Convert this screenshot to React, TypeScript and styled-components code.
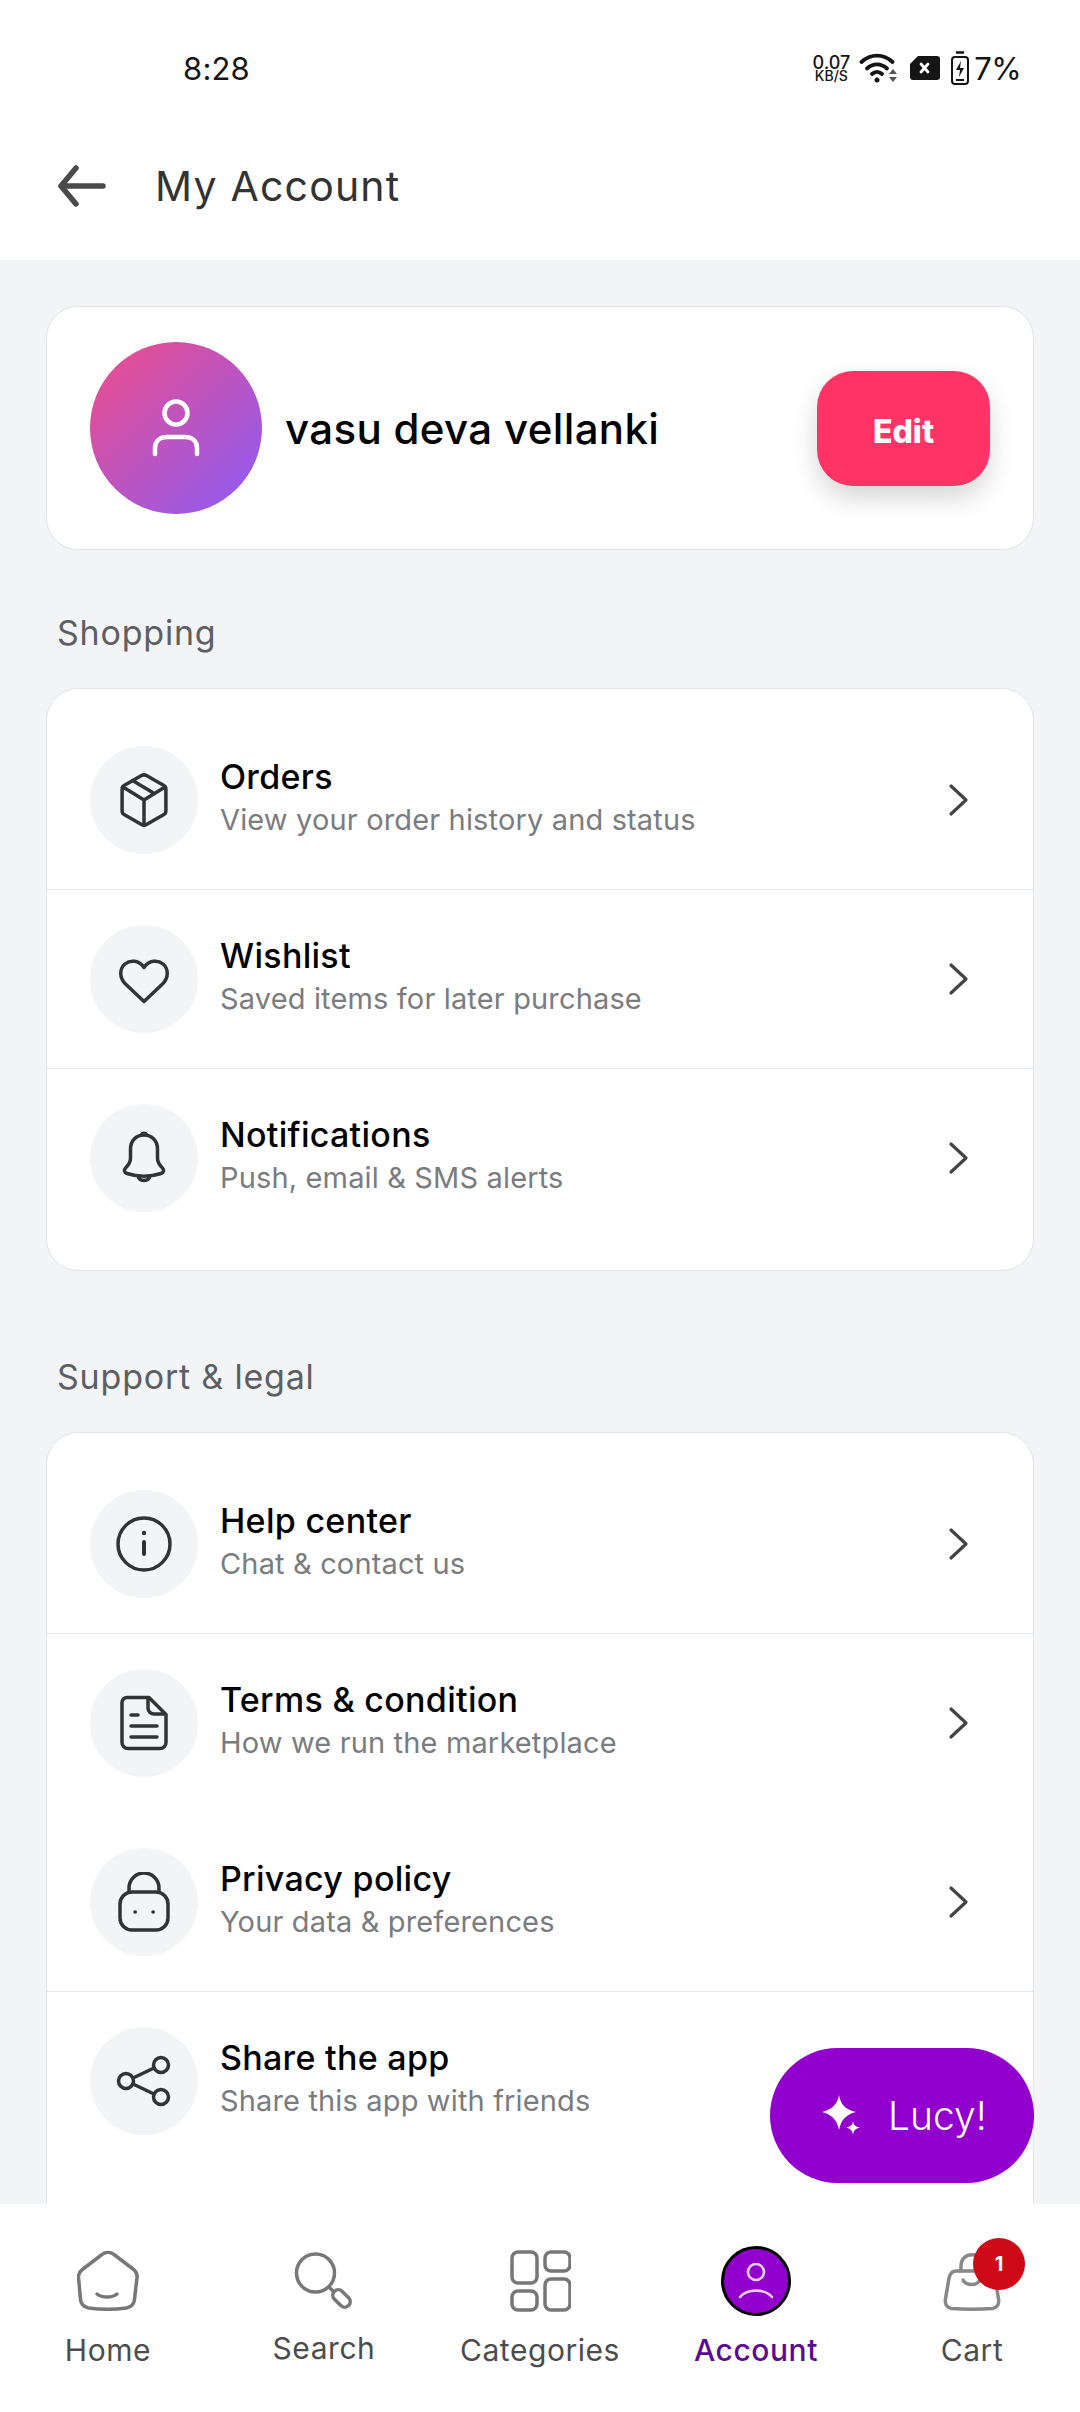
import React from 'react'
import styled, { createGlobalStyle } from 'styled-components'

const GlobalStyle = createGlobalStyle`
  html, body {
    margin: 0;
    padding: 0;
    background: #fff;
  }
  * {
    box-sizing: border-box;
  }
  body {
    font-family: Inter, "Noto Sans", sans-serif;
  }
`

const Screen = styled.div`
  position: relative;
  display: flex;
  flex-direction: column;
  width: 1080px;
  height: 2412px;
  overflow: hidden;
  background: #f3f4f6;
`

const StatusBar = styled.div`
  display: flex;
  align-items: center;
  justify-content: space-between;
  height: 136px;
  padding: 0 59px 0 183px;
  background: #fff;
  color: #151515;
`

const Clock = styled.span`
  font-size: 31px;
  letter-spacing: 0.2px;
`

const StatusIcons = styled.div`
  display: flex;
  align-items: center;
`

const NetSpeed = styled.div`
  display: flex;
  flex-direction: column;
  align-items: center;
  margin-right: 9px;
  font-size: 18px;
  font-weight: 500;
  line-height: 15px;
  span:last-child {
    font-size: 14px;
    line-height: 12px;
  }
`

const Percent = styled.span`
  margin-left: 4px;
  font-size: 31px;
  letter-spacing: -0.6px;
`

const Header = styled.header`
  display: flex;
  align-items: center;
  gap: 49px;
  height: 124px;
  padding: 0 0 24px 58px;
  background: #fff;
`

const Title = styled.h1`
  margin: 0;
  font-size: 41px;
  font-weight: 400;
  letter-spacing: 1.2px;
  color: #333;
`

const Scroller = styled.main`
  flex: 1;
  min-height: 0;
  overflow: hidden;
  padding: 46px 46px 0;
`

const Card = styled.section`
  background: #fff;
  border: 1px solid #e2e3e6;
  border-radius: 32px;
`

const ProfileCard = styled(Card)`
  display: flex;
  align-items: center;
  height: 244px;
  padding: 0 43px;
`

const Avatar = styled.div`
  display: flex;
  align-items: center;
  justify-content: center;
  flex: none;
  width: 172px;
  height: 172px;
  border-radius: 50%;
  background: linear-gradient(135deg, #f04c88, #8a5cf6);
`

const Name = styled.div`
  flex: 1;
  margin-left: 23px;
  font-size: 42px;
  font-weight: 500;
  letter-spacing: 0.35px;
  color: #000;
`

const EditButton = styled.button`
  width: 173px;
  height: 115px;
  padding: 6px 0 0;
  border: 0;
  border-radius: 36px;
  background: #ff3366;
  color: #fff;
  font-family: inherit;
  font-size: 32px;
  font-weight: 800;
  box-shadow: 0 12px 26px rgba(0, 0, 0, 0.16);
`

const SectionLabel = styled.h2<{ $top: number }>`
  margin: ${({ $top }) => $top}px 0 32px 11px;
  font-size: 34px;
  line-height: 46px;
  font-weight: 400;
  letter-spacing: 0.8px;
  color: #5c5f63;
`

const RowList = styled(Card)<{ $runsOn?: boolean }>`
  padding: 22px 0 ${({ $runsOn }) => ($runsOn ? 120 : 22)}px;
`

const Row = styled.div<{ $divider?: boolean }>`
  display: flex;
  align-items: center;
  padding: 35px 62px 35px 43px;
  border-bottom: 1px solid ${({ $divider }) => ($divider ? '#e8e9eb' : 'transparent')};
`

const IconCircle = styled.div`
  display: flex;
  align-items: center;
  justify-content: center;
  flex: none;
  width: 108px;
  height: 108px;
  border-radius: 50%;
  background: #f3f4f6;
`

const RowText = styled.div`
  flex: 1;
  margin-left: 22px;
  padding-bottom: 2px;
`

const RowTitle = styled.div`
  font-size: 34px;
  font-weight: 500;
  line-height: 42px;
  letter-spacing: 0.3px;
  color: #000;
`

const RowSub = styled.div`
  font-size: 29px;
  line-height: 44px;
  letter-spacing: 0.15px;
  color: #7a7c80;
`

const Fab = styled.button`
  position: absolute;
  right: 46px;
  bottom: 229px;
  display: flex;
  align-items: center;
  gap: 26px;
  width: 264px;
  height: 135px;
  padding: 0 0 0 52px;
  border: 0;
  border-radius: 68px;
  background: #9100cc;
  color: #fff;
  font-family: inherit;
  font-size: 39px;
  font-weight: 300;
`

const BottomNav = styled.nav`
  display: grid;
  grid-template-columns: repeat(5, 1fr);
  flex: none;
  height: 208px;
  padding-top: 42px;
  background: #fff;
`

const NavItem = styled.div`
  position: relative;
  display: flex;
  flex-direction: column;
  align-items: center;
`

const NavIcon = styled.div`
  display: flex;
  align-items: center;
  justify-content: center;
  height: 70px;
`

const NavLabel = styled.span<{ $active?: boolean; $lift?: boolean }>`
  margin-top: ${({ $lift }) => ($lift ? 10 : 12)}px;
  font-size: 30px;
  line-height: 44px;
  letter-spacing: 0.55px;
  font-weight: ${({ $active }) => ($active ? 500 : 400)};
  color: ${({ $active }) => ($active ? '#5b0a91' : '#4c4c4c')};
`

const ActiveBubble = styled.div`
  display: flex;
  align-items: center;
  justify-content: center;
  width: 70px;
  height: 70px;
  border: 3px solid #000;
  border-radius: 50%;
  background: #9100cc;
`

const Badge = styled.span`
  position: absolute;
  top: -8px;
  left: 109px;
  display: flex;
  align-items: center;
  justify-content: center;
  width: 52px;
  height: 52px;
  border-radius: 50%;
  background: #cf0a18;
  color: #fff;
  font-size: 20px;
  font-weight: 700;
`

const Line = ({ size, color = '#333', sw = 3.5, vb = 56, children }: { size: number; color?: string; sw?: number; vb?: number; children: React.ReactNode }) => (
  <svg width={size} height={size} viewBox={`0 0 ${vb} ${vb}`} fill="none" stroke={color} strokeWidth={sw} strokeLinecap="round" strokeLinejoin="round">
    {children}
  </svg>
)

const BoxIcon = () => (
  <Line size={56}>
    <path d="M25.5 3.6a5 5 0 0 1 5 0l17.400 10a4 4 0 0 1 2 3.500v21.800a4 4 0 0 1-2 3.500l-17.400 10a5 5 0 0 1-5 0l-17.400-10a4 4 0 0 1-2-3.500V17.100a4 4 0 0 1 2-3.500z" />
    <path d="M7 15l21 13 21-13M28 28v25M16.500 8.500l21 12.500" />
  </Line>
)

const HeartIcon = () => (
  <Line size={56}>
    <path d="M28 50.500 9.500 33C3 26.500 3.500 17.500 9 13c5.500-4.500 14-3.800 19 3.500 5-7.300 13.500-8 19-3.500 5.500 4.500 6 13.500-.5 20z" />
  </Line>
)

const BellIcon = () => (
  <Line size={56}>
    <path d="M28 5c-8 0-13.500 6-13.500 14v9c0 4-1.500 6.500-4.500 9.500-2.500 2.500-2 5 1 6 11 3.500 23 3.500 34 0 3-1 3.500-3.500 1-6-3-3-4.500-5.500-4.500-9.500v-9C41.500 11 36 5 28 5z" />
    <path d="M22.500 47.500c2 4 9 4 11 0M25.500 5c.5-2.500 4.500-2.500 5 0" />
  </Line>
)

const InfoIcon = () => (
  <Line size={56}>
    <circle cx="28" cy="28" r="26" />
    <path d="M28 26v12" strokeWidth={4} />
    <circle cx="28" cy="17" r="1.200" strokeWidth={2} fill="#333" />
  </Line>
)

const FileIcon = () => (
  <Line size={56}>
    <path d="M11 2.500h22l17 17V47.500a6 6 0 0 1-6 6H12a6 6 0 0 1-6-6V7.500a5 5 0 0 1 5-5z" />
    <path d="M32 3v10a6 6 0 0 0 6 6h11M15 20h7M15 31h26M15 42h26" />
  </Line>
)

const LockIcon = () => (
  <Line size={60} vb={60}>
    <rect x="6" y="20" width="48" height="38" rx="12" />
    <path d="M15 20v-4a15 15 0 0 1 30 0v4" />
    <path d="M21 40h.2M39 40h.2" strokeWidth={3.500} />
  </Line>
)

const ShareIcon = () => (
  <Line size={56}>
    <circle cx="10" cy="28" r="7.500" />
    <circle cx="45" cy="12" r="7.500" />
    <circle cx="45" cy="44" r="7.500" />
    <path d="M17 25l21-10M17 31l21 10" />
  </Line>
)

const Chevron = () => (
  <svg width="24" height="34" viewBox="0 0 24 34" fill="none" stroke="#444" strokeWidth="3.200" strokeLinecap="round" strokeLinejoin="round">
    <path d="M4 3l15 14L4 31" />
  </svg>
)

const BackArrow = () => (
  <svg width="48" height="42" viewBox="0 0 48 42" fill="none" stroke="#4a4a4a" strokeWidth="5.500" strokeLinecap="round" strokeLinejoin="round">
    <path d="M45 21H3M18 3L3 21l15 18" />
  </svg>
)

const AvatarIcon = () => (
  <svg width="48" height="58" viewBox="0 0 48 58" fill="none" stroke="#fff" strokeWidth="4.500" strokeLinecap="round">
    <circle cx="24" cy="14" r="11.500" />
    <path d="M3 55v-6c0-7 5-11 12-11h18c7 0 12 4 12 11v6" />
  </svg>
)

const AccountIcon = () => (
  <svg width="36" height="36" viewBox="0 0 36 36" fill="none" stroke="#eacdf5" strokeWidth="2.600" strokeLinecap="round">
    <circle cx="18" cy="9" r="8" />
    <path d="M2 34c7-8.500 25-8.500 32 0" />
  </svg>
)

const HomeIcon = () => (
  <Line size={62} vb={62} color="#777">
    <path d="M25 4.500c3.500-2.800 8.500-2.800 12 0L56 19c3 2.300 4.300 5 4 8.500l-2.500 22c-.5 5-3.500 7.500-8 8.500-12 1.500-26 1.500-38 0-4.500-1-7.500-3.500-8-8.500L1.500 27.500C1.200 24 3 21.300 6 19z" />
    <path d="M20 44c5 4 15 4 20 0" />
  </Line>
)

const SearchIcon = () => (
  <Line size={62} vb={62} color="#777">
    <circle cx="22.500" cy="23" r="19" />
    <path d="M36 37l4 4" />
    <rect x="38.500" y="43" width="20" height="11" rx="5.500" transform="rotate(45 48.500 48.500)" />
  </Line>
)

const GridIcon = () => (
  <Line size={62} vb={62} color="#777">
    <rect x="3" y="2" width="25" height="31" rx="6" />
    <rect x="36" y="2" width="25" height="19" rx="6" />
    <rect x="3" y="41" width="25" height="19" rx="6" />
    <rect x="36" y="29" width="25" height="31" rx="6" />
  </Line>
)

const BagIcon = () => (
  <Line size={62} vb={62} color="#888">
    <path d="M15 21h32c4 0 6 3 7 7l3.500 21c1 6-2 9-6 9.500-13 1-28 1-41 0-4-.5-7-3.500-6-9.500L8 28c1-4 3-7 7-7z" />
    <path d="M20 21v-5c0-15 22-15 22 0v5M22 30c3 6 14 6 17 0" />
  </Line>
)

const SparkleIcon = () => (
  <svg width="40" height="44" viewBox="0 0 40 44" fill="#fff">
    <path d="M17 1c1.500 9 6 14.500 17 17-10 2.500-15 8-17 18-2-10-7-15.500-17-18C10 15.500 15.500 10 17 1z" />
    <path d="M31 27c.5 4 2.500 6 7 6.500-4.500 1-6.500 3-7 7.500-.5-4.500-2.500-6.500-7-7.500 4.500-.5 6.500-2.500 7-6.500z" />
  </svg>
)

const WifiIcon = () => (
  <svg width="40" height="30" viewBox="0 0 40 30" fill="none">
    <g stroke="#151515" strokeWidth="3.800" strokeLinecap="round">
      <path d="M2.500 9c9-8.500 22-8.500 31 0" />
      <path d="M8 15.500c6-5.500 14-5.500 20 0" />
      <path d="M13 21c3-2.800 7-2.800 10 0" />
    </g>
    <circle cx="18" cy="27" r="2.500" fill="#151515" />
    <path d="M34 16l4 5h-8zM34 29l4-5h-8z" fill="#555" />
  </svg>
)

const SimIcon = () => (
  <svg width="32" height="26" viewBox="0 0 32 26" style={{ marginLeft: 10 }}>
    <path d="M9 1h19a3 3 0 0 1 3 3v18a3 3 0 0 1-3 3H4a3 3 0 0 1-3-3V9z" fill="#151515" />
    <path d="M12 9l7 8M19 9l-7 8" stroke="#fff" strokeWidth="2.800" strokeLinecap="round" />
  </svg>
)

const BatteryIcon = () => (
  <svg width="20" height="34" viewBox="0 0 20 34" fill="none" style={{ marginLeft: 9 }}>
    <path d="M6 1.500h8" stroke="#151515" strokeWidth="2.500" />
    <rect x="2" y="6" width="16" height="27" rx="3" stroke="#151515" strokeWidth="2" />
    <path d="M11 10l-5 9h4l-1 7 5-9h-4z" fill="#151515" />
    <path d="M6 29h8" stroke="#151515" strokeWidth="2" />
  </svg>
)

const shopping = [
  { title: 'Orders', sub: 'View your order history and status', icon: <BoxIcon />, divider: true },
  { title: 'Wishlist', sub: 'Saved items for later purchase', icon: <HeartIcon />, divider: true },
  { title: 'Notifications', sub: 'Push, email & SMS alerts', icon: <BellIcon />, divider: false },
]

const support = [
  { title: 'Help center', sub: 'Chat & contact us', icon: <InfoIcon />, divider: true },
  { title: 'Terms & condition', sub: 'How we run the marketplace', icon: <FileIcon />, divider: false },
  { title: 'Privacy policy', sub: 'Your data & preferences', icon: <LockIcon />, divider: true },
  { title: 'Share the app', sub: 'Share this app with friends', icon: <ShareIcon />, divider: false, noChevron: true },
]

type RowData = (typeof support)[number]

function Rows({ items, runsOn }: { items: RowData[]; runsOn?: boolean }) {
  return (
    <RowList $runsOn={runsOn}>
      {items.map((item) => (
        <Row key={item.title} $divider={item.divider}>
          <IconCircle>{item.icon}</IconCircle>
          <RowText>
            <RowTitle>{item.title}</RowTitle>
            <RowSub>{item.sub}</RowSub>
          </RowText>
          {!item.noChevron && <Chevron />}
        </Row>
      ))}
    </RowList>
  )
}

export default function App() {
  return (
    <Screen>
      <GlobalStyle />
      <StatusBar>
        <Clock>8:28</Clock>
        <StatusIcons>
          <NetSpeed>
            <span>0.07</span>
            <span>KB/S</span>
          </NetSpeed>
          <WifiIcon />
          <SimIcon />
          <BatteryIcon />
          <Percent>7%</Percent>
        </StatusIcons>
      </StatusBar>
      <Header>
        <BackArrow />
        <Title>My Account</Title>
      </Header>
      <Scroller>
        <ProfileCard>
          <Avatar>
            <AvatarIcon />
          </Avatar>
          <Name>vasu deva vellanki</Name>
          <EditButton>Edit</EditButton>
        </ProfileCard>
        <SectionLabel $top={60}>Shopping</SectionLabel>
        <Rows items={shopping} />
        <SectionLabel $top={83}>Support &amp; legal</SectionLabel>
        <Rows items={support} runsOn />
      </Scroller>
      <Fab>
        <SparkleIcon />
        Lucy!
      </Fab>
      <BottomNav>
        <NavItem>
          <NavIcon><HomeIcon /></NavIcon>
          <NavLabel>Home</NavLabel>
        </NavItem>
        <NavItem>
          <NavIcon><SearchIcon /></NavIcon>
          <NavLabel $lift>Search</NavLabel>
        </NavItem>
        <NavItem>
          <NavIcon><GridIcon /></NavIcon>
          <NavLabel>Categories</NavLabel>
        </NavItem>
        <NavItem>
          <ActiveBubble><AccountIcon /></ActiveBubble>
          <NavLabel $active>Account</NavLabel>
        </NavItem>
        <NavItem>
          <NavIcon><BagIcon /></NavIcon>
          <NavLabel>Cart</NavLabel>
          <Badge>1</Badge>
        </NavItem>
      </BottomNav>
    </Screen>
  )
}
